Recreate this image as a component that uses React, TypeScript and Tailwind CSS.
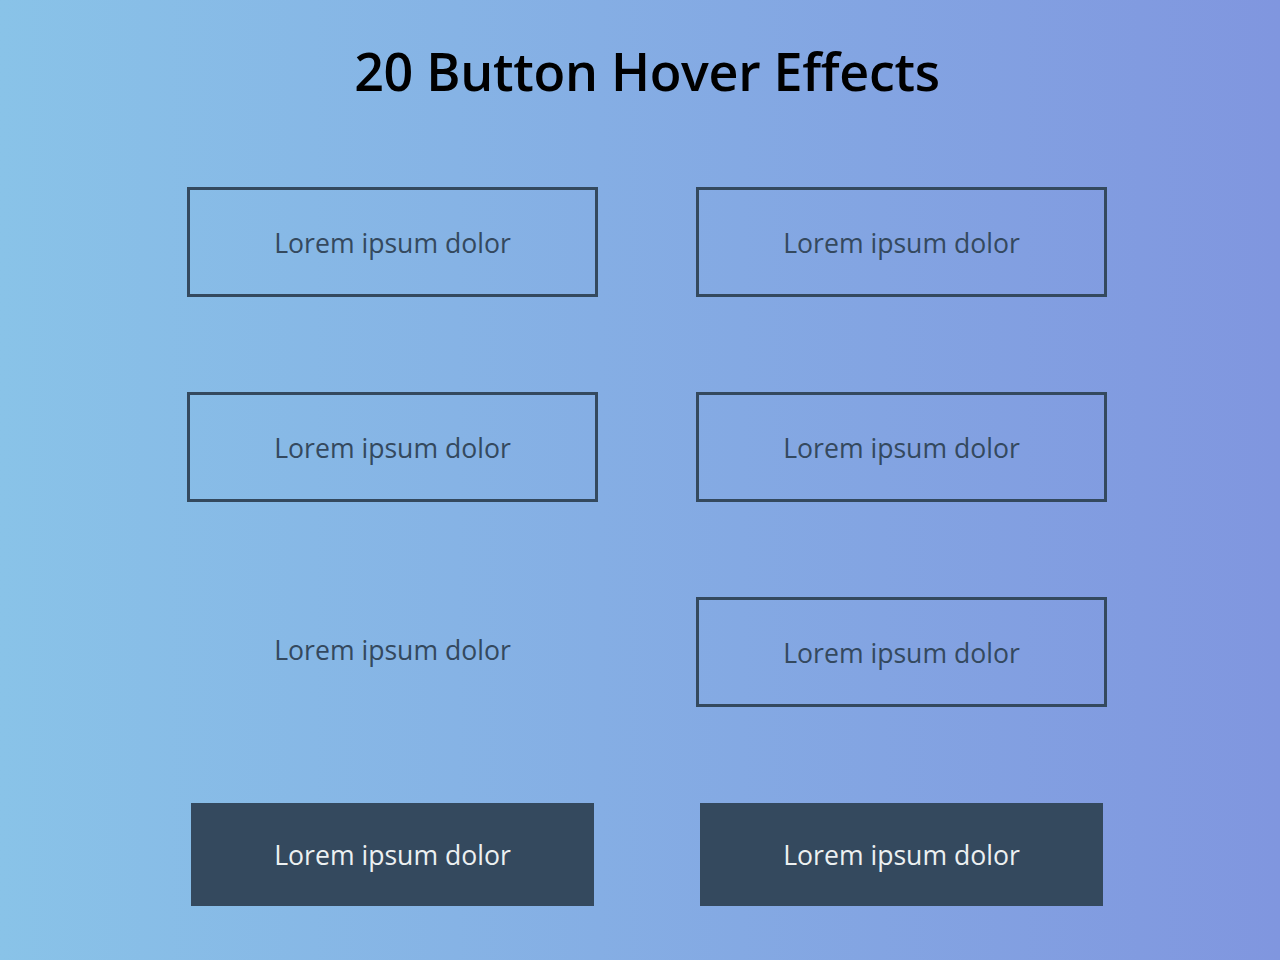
import React from 'react';

type Variant = 'outline' | 'plain' | 'solid';

const buttons: Variant[] = ['outline', 'outline', 'outline', 'outline', 'plain', 'outline', 'solid', 'solid'];

const HoverButton: React.FC<{ variant: Variant }> = ({ variant }) => {
  if (variant === 'solid') {
    return (
      <div className="h-[110px] px-[4px] pt-[1px] pb-[6px]">
        <button className="w-full h-full pt-[2px] bg-[#34495e] text-[#ecf0f1] text-[26.6px] flex items-center justify-center">
          Lorem ipsum dolor
        </button>
      </div>
    );
  }
  if (variant === 'plain') {
    return (
      <button className="h-[110px] w-full pb-[3px] text-[#34495e] text-[26.6px] flex items-center justify-center">
        Lorem ipsum dolor
      </button>
    );
  }
  return (
    <button className="h-[110px] w-full pt-[4px] border-[3px] border-[#34495e] text-[#34495e] text-[26.6px] flex items-center justify-center">
      Lorem ipsum dolor
    </button>
  );
};

export default function App() {
  return (
    <div
      className="min-h-[960px] w-full bg-gradient-to-r from-[#89c3e8] to-[#8096df]"
      style={{ fontFamily: '"Open Sans", sans-serif' }}
    >
      <h1 className="pt-[34px] pl-[14px] text-center text-[52px] leading-[74px] tracking-[-0.3px] font-semibold text-black">
        20 Button Hover Effects
      </h1>
      <div className="mt-[79px] ml-[187px] grid grid-cols-[411px_411px] gap-x-[98px] gap-y-[95px]">
        {buttons.map((v, i) => (
          <HoverButton key={i} variant={v} />
        ))}
      </div>
    </div>
  );
}
